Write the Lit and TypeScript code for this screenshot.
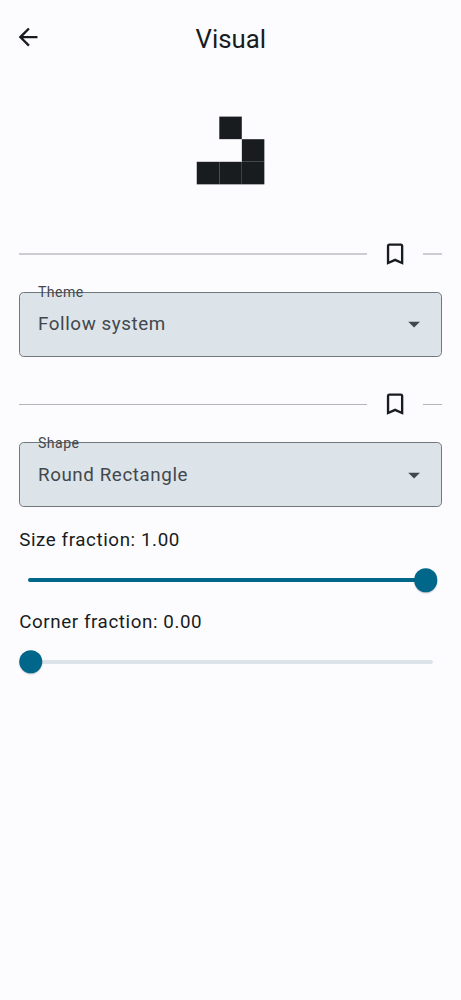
import { LitElement, html, svg, css } from "lit";
import { customElement, property } from "lit/decorators.js";

@customElement("section-divider")
class SectionDivider extends LitElement {
  static styles = css`
    :host { display: flex; align-items: center; height: 56px; }
    .line { height: var(--line-height, 1px); background: var(--line-color, #b4b5b8); }
    .long { flex: 1; }
    .short { width: 18.8px; }
    .button { width: 56.3px; display: flex; justify-content: center; }
    svg { width: 28.2px; height: 28.2px; fill: #191c1e; display: block; }
  `;
  render() {
    return html`
      <div class="line long"></div>
      <div class="button">
        <svg viewBox="0 0 24 24"><path d="M17 3H7c-1.1 0-2 .9-2 2v16l7-3 7 3V5c0-1.1-.9-2-2-2zm0 15-5-2.18L7 18V5h10v13z"/></svg>
      </div>
      <div class="line short"></div>
    `;
  }
}

@customElement("select-field")
class SelectField extends LitElement {
  @property() label = "";
  @property() value = "";
  static styles = css`
    :host { display: block; height: 65px; position: relative; }
    .box {
      box-sizing: border-box; height: 100%; display: flex; align-items: center;
      justify-content: space-between; padding: 0 13px var(--value-lift, 1px) 18.2px;
      border: 1px solid #70787d; border-radius: 4.7px;
      background: #dce3e9; color: #41484d;
      font-size: 18.78px; letter-spacing: 0.587px;
    }
    .label {
      position: absolute; left: 19.2px; top: var(--label-top, -9px); line-height: 19px;
      font-size: 14.1px; letter-spacing: 0.47px; color: #41484d;
    }
    svg { width: 28.2px; height: 28.2px; fill: #41484d; }
  `;
  render() {
    return html`
      <div class="box">
        <span>${this.value}</span>
        <svg viewBox="0 0 24 24"><path d="M7 10l5 5 5-5z"/></svg>
      </div>
      <span class="label">${this.label}</span>
    `;
  }
}

@customElement("value-slider")
class ValueSlider extends LitElement {
  @property() label = "";
  @property({ type: Number }) value = 0;
  static styles = css`
    :host { display: block; height: 81.8px; color: #191c1e; }
    .text { font-size: 18.78px; line-height: 28.2px; letter-spacing: 0.587px; padding-left: 0.4px; }
    .slider { height: 51.4px; display: flex; align-items: center; padding: 0 9.4px; }
    .track { flex: 1; height: 4.7px; border-radius: 3px; background: #dce3e9; position: relative; }
    .fill { height: 100%; border-radius: 3px; background: #00668a; }
    .rail { position: absolute; left: 2.5px; right: 7px; top: 50%; }
    .thumb {
      position: absolute; width: 23.5px; height: 23.5px; border-radius: 50%;
      background: #00668a; transform: translate(-50%, -50%);
      box-shadow: 0 1px 1.5px rgba(0, 0, 0, 0.2);
    }
  `;
  render() {
    const pct = `${this.value * 100}%`;
    return html`
      <div class="text">${this.label}: ${this.value.toFixed(2)}</div>
      <div class="slider">
        <div class="track">
          <div class="fill" style="width:${pct}"></div>
          <div class="rail"><div class="thumb" style="left:${pct}"></div></div>
        </div>
      </div>
    `;
  }
}

@customElement("app-root")
class AppRoot extends LitElement {
  static styles = css`
    :host {
      display: block; box-sizing: border-box; min-height: 1000px; overflow: hidden;
      background: #fcfcff; color: #191c1e; font-family: Roboto, sans-serif;
    }
    header { display: grid; grid-template-columns: 56.3px 1fr 56.3px; align-items: center; height: 75px; }
    header svg { width: 28.2px; height: 28.2px; margin-left: 14.1px; fill: #191c1e; display: block; }
    h1 { margin: 3px 0 0 0.6px; text-align: center; font-size: 25.8px; font-weight: 400; line-height: 33px; }
    .preview { display: flex; justify-content: center; height: 151px; align-items: center; }
    .glider { width: 69px; height: 69px; display: block; }
    main { padding: 0 18.8px; }
    .soft { --line-height: 2px; --line-color: #cccdd0; }
    select-field { margin: 10px 0 19px; }
    .second { height: 65.4px; margin-bottom: 18.8px; --label-top: -8px; --value-lift: 0px; }
  `;
  render() {
    const cells = [[1, 0], [2, 1], [0, 2], [1, 2], [2, 2]];
    return html`
      <header>
        <svg viewBox="0 0 24 24"><path d="M20 11H7.83l5.59-5.59L12 4l-8 8 8 8 1.41-1.41L7.83 13H20v-2z"/></svg>
        <h1>Visual</h1>
      </header>
      <div class="preview">
        <svg class="glider" viewBox="0 0 69 69" fill="#191c1e">
          ${cells.map(([x, y]) => svg`<rect x=${0.75 + x * 22.55} y=${0.6 + y * 22.6} width="22.5" height="22.55"></rect>`)}
        </svg>
      </div>
      <main>
        <section-divider class="soft"></section-divider>
        <select-field label="Theme" value="Follow system"></select-field>
        <section-divider></section-divider>
        <select-field class="second" label="Shape" value="Round Rectangle"></select-field>
        <value-slider label="Size fraction" .value=${1}></value-slider>
        <value-slider label="Corner fraction" .value=${0}></value-slider>
      </main>
    `;
  }
}
